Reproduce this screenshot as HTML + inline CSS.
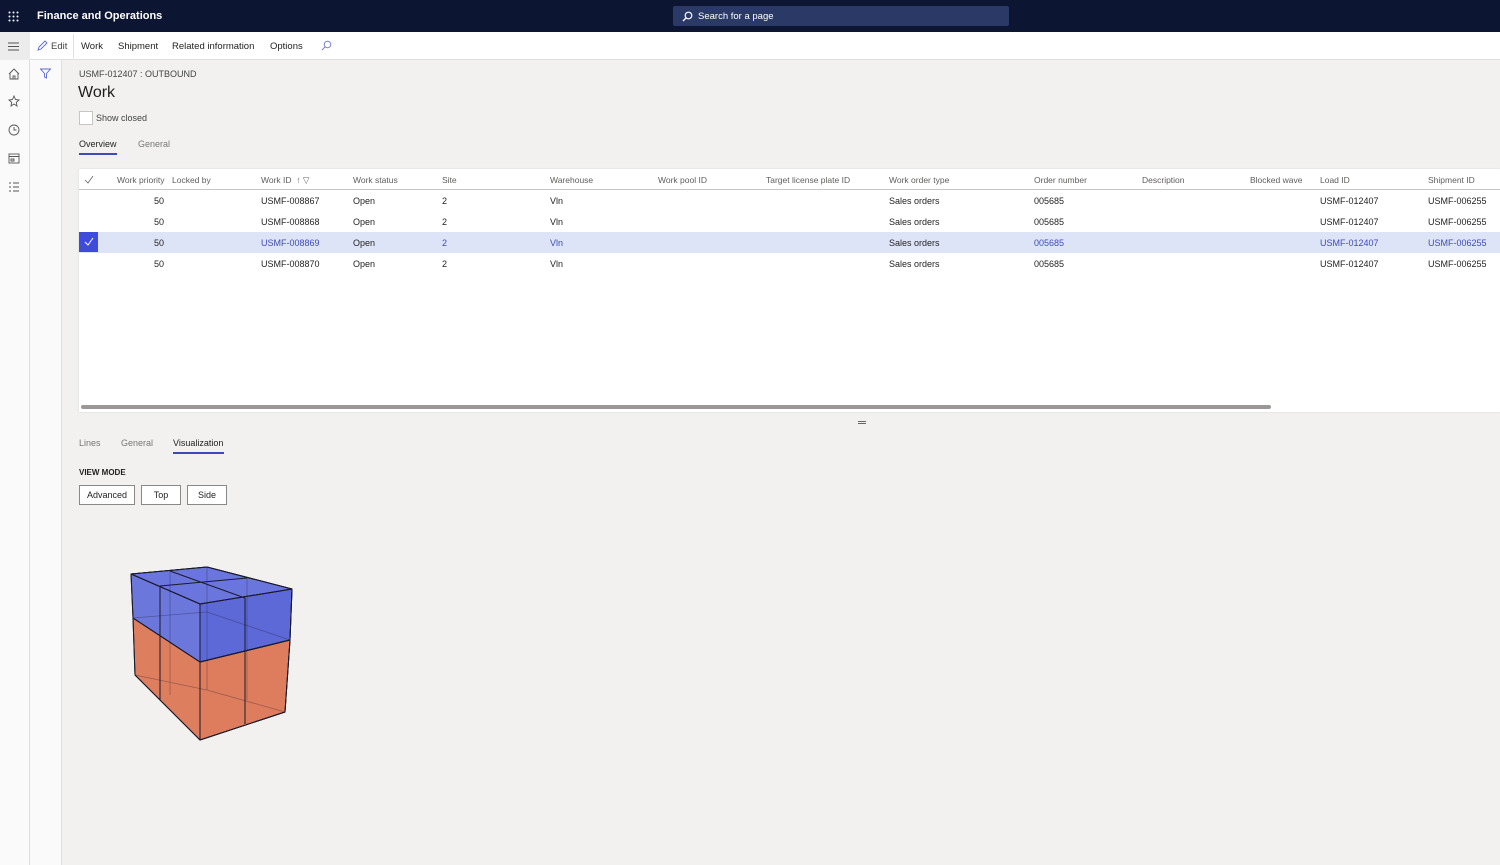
<!DOCTYPE html>
<html><head><meta charset="utf-8"><style>
*{margin:0;padding:0;box-sizing:border-box}
body{width:1500px;height:865px;overflow:hidden;background:#f2f1ef;font-family:"Liberation Sans",sans-serif;color:#201f1e;position:relative;font-size:9px}
.a{position:absolute;white-space:nowrap}
.top{left:0;top:0;width:1500px;height:32px;background:#0c1633}
.bar{left:0;top:32px;width:1500px;height:28px;background:#fff;border-bottom:1px solid #e1dfdd}
.nav{left:0;top:60px;width:30px;height:805px;background:#fafafa;border-right:1px solid #e1dfdd}
.fp{left:30px;top:60px;width:32px;height:805px;background:#fafafa;border-right:1px solid #e1dfdd}
.grid{left:79px;top:169px;width:1421px;height:243px;background:#fff;box-shadow:0 0 2px rgba(0,0,0,.12)}
.hd{color:#605e5c;font-size:8.5px;top:175px}
.c{font-size:9px}
.sel{background:#dde4f8}
.lk{color:#3e4bb5}
.btn{top:485px;height:20px;border:1px solid #8a8886;background:#fff;font-size:9px;text-align:center;line-height:18px}
</style></head><body>
<div class="a top"></div>
<svg class="a" style="left:8px;top:11px" width="11" height="11"><g fill="#fff"><circle cx="1.5" cy="1.5" r="1"/><circle cx="5.5" cy="1.5" r="1"/><circle cx="9.5" cy="1.5" r="1"/><circle cx="1.5" cy="5.5" r="1"/><circle cx="5.5" cy="5.5" r="1"/><circle cx="9.5" cy="5.5" r="1"/><circle cx="1.5" cy="9.5" r="1"/><circle cx="5.5" cy="9.5" r="1"/><circle cx="9.5" cy="9.5" r="1"/></g></svg>
<div class="a" style="left:37px;top:10px;color:#fff;font-size:11px;font-weight:bold">Finance and Operations</div>
<div class="a" style="left:673px;top:6px;width:336px;height:20px;background:#2b3966;border-radius:2px"></div>
<svg class="a" style="left:682px;top:11px" width="11" height="11"><circle cx="6.5" cy="4.5" r="3.3" stroke="#fff" stroke-width="1.2" fill="none"/><path d="M4 7 L1 10" stroke="#fff" stroke-width="1.3"/></svg>
<div class="a" style="left:698px;top:11px;color:#fff;font-size:9.5px">Search for a page</div>
<div class="a bar"></div>
<div class="a" style="left:0;top:32px;width:30px;height:28px;background:#ececec"></div>
<svg class="a" style="left:8px;top:42px" width="12" height="9"><path d="M0 1H11M0 4.5H11M0 8H11" stroke="#555" stroke-width="1"/></svg>
<svg class="a" style="left:37px;top:40px" width="11" height="11"><path d="M1 10 L2 7 L8 1 L10 3 L4 9 Z" stroke="#5c67c9" fill="none" stroke-width="0.9"/></svg>
<div class="a" style="left:51px;top:41px;font-size:9.5px;color:#444">Edit</div>
<div class="a" style="left:73px;top:34px;width:1px;height:24px;background:#e1dfdd"></div>
<div class="a" style="left:81px;top:41px;font-size:9.5px">Work</div>
<div class="a" style="left:118px;top:41px;font-size:9.5px">Shipment</div>
<div class="a" style="left:172px;top:41px;font-size:9.5px">Related information</div>
<div class="a" style="left:270px;top:41px;font-size:9.5px">Options</div>
<svg class="a" style="left:321px;top:40px" width="11" height="11"><circle cx="6.5" cy="4.5" r="3.3" stroke="#7a80d0" stroke-width="1" fill="none"/><path d="M4 7 L1 10" stroke="#7a80d0" stroke-width="1.1"/></svg>
<div class="a nav"></div><div class="a fp"></div>
<svg class="a" style="left:7px;top:67px" width="14" height="130" fill="none" stroke="#555" stroke-width="0.9">
<path d="M2 7 L7 2 L12 7 M3 6V12H11V6 M6 12V9H8V12"/>
<path d="M7 29 L8.5 32.5 L12 33 L9.3 35.3 L10 39 L7 37 L4 39 L4.7 35.3 L2 33 L5.5 32.5Z"/>
<circle cx="7" cy="63" r="5"/><path d="M7 60V63H9.5"/>
<rect x="2" y="87" width="10" height="9"/><path d="M2 89.5H12M4 92H7V94H4Z"/>
<path d="M2 116H4M2 120H4M2 124H4M6 116H12M6 120H12M6 124H12"/></svg>
<svg class="a" style="left:40px;top:68px" width="11" height="11"><path d="M0.5 1H10.5L6.5 5.5V10L4.5 9V5.5Z" stroke="#5c67c9" fill="none" stroke-width="0.9"/></svg>
<div class="a" style="left:79px;top:69px;font-size:9px;color:#444">USMF-012407 : OUTBOUND</div>
<div class="a" style="left:78px;top:84px;font-size:16px">Work</div>
<div class="a" style="left:79px;top:111px;width:14px;height:14px;background:#fff;border:1px solid #c8c6c4"></div>
<div class="a" style="left:96px;top:113px;font-size:9px;color:#444">Show closed</div>
<div class="a" style="left:79px;top:139px;font-size:9px">Overview</div>
<div class="a" style="left:79px;top:153px;width:38px;height:2px;background:#3e4bb5"></div>
<div class="a" style="left:138px;top:139px;font-size:9px;color:#777">General</div>
<div class="a grid"></div>
<div class="a" style="left:79px;top:189px;width:1421px;height:1px;background:#c8c6c4"></div>
<div class="a sel" style="left:79px;top:232px;width:1421px;height:21px"></div>
<div class="a" style="left:79px;top:232px;width:19px;height:20px;background:#3e4bdb"></div>
<svg class="a" style="left:84px;top:237px" width="10" height="9"><path d="M1 5L4 8L9 1" stroke="#fff" fill="none" stroke-width="1"/></svg>
<svg class="a" style="left:84px;top:175px" width="10" height="9"><path d="M1 5L4 8L9 1" stroke="#666" fill="none" stroke-width="0.8"/></svg>
<div class="a hd" style="left:117px">Work priority</div>
<div class="a hd" style="left:172px">Locked by</div>
<div class="a hd" style="left:261px">Work ID &nbsp;↑ ▽</div>
<div class="a hd" style="left:353px">Work status</div>
<div class="a hd" style="left:442px">Site</div>
<div class="a hd" style="left:550px">Warehouse</div>
<div class="a hd" style="left:658px">Work pool ID</div>
<div class="a hd" style="left:766px">Target license plate ID</div>
<div class="a hd" style="left:889px">Work order type</div>
<div class="a hd" style="left:1034px">Order number</div>
<div class="a hd" style="left:1142px">Description</div>
<div class="a hd" style="left:1250px">Blocked wave</div>
<div class="a hd" style="left:1320px">Load ID</div>
<div class="a hd" style="left:1428px">Shipment ID</div>
<div class="a c" style="left:154px;top:196px">50</div><div class="a c" style="left:261px;top:196px">USMF-008867</div><div class="a c" style="left:353px;top:196px">Open</div><div class="a c" style="left:442px;top:196px">2</div><div class="a c" style="left:550px;top:196px">Vln</div><div class="a c" style="left:889px;top:196px">Sales orders</div><div class="a c" style="left:1034px;top:196px">005685</div><div class="a c" style="left:1320px;top:196px">USMF-012407</div><div class="a c" style="left:1428px;top:196px">USMF-006255</div>
<div class="a c" style="left:154px;top:217px">50</div><div class="a c" style="left:261px;top:217px">USMF-008868</div><div class="a c" style="left:353px;top:217px">Open</div><div class="a c" style="left:442px;top:217px">2</div><div class="a c" style="left:550px;top:217px">Vln</div><div class="a c" style="left:889px;top:217px">Sales orders</div><div class="a c" style="left:1034px;top:217px">005685</div><div class="a c" style="left:1320px;top:217px">USMF-012407</div><div class="a c" style="left:1428px;top:217px">USMF-006255</div>
<div class="a c" style="left:154px;top:238px">50</div><div class="a c lk" style="left:261px;top:238px">USMF-008869</div><div class="a c" style="left:353px;top:238px">Open</div><div class="a c lk" style="left:442px;top:238px">2</div><div class="a c lk" style="left:550px;top:238px">Vln</div><div class="a c" style="left:889px;top:238px">Sales orders</div><div class="a c lk" style="left:1034px;top:238px">005685</div><div class="a c lk" style="left:1320px;top:238px">USMF-012407</div><div class="a c lk" style="left:1428px;top:238px">USMF-006255</div>
<div class="a c" style="left:154px;top:259px">50</div><div class="a c" style="left:261px;top:259px">USMF-008870</div><div class="a c" style="left:353px;top:259px">Open</div><div class="a c" style="left:442px;top:259px">2</div><div class="a c" style="left:550px;top:259px">Vln</div><div class="a c" style="left:889px;top:259px">Sales orders</div><div class="a c" style="left:1034px;top:259px">005685</div><div class="a c" style="left:1320px;top:259px">USMF-012407</div><div class="a c" style="left:1428px;top:259px">USMF-006255</div>
<div class="a" style="left:81px;top:405px;width:1190px;height:4px;background:#9a9896;border-radius:2px"></div>
<div class="a" style="left:858px;top:421px;width:8px;height:1px;background:#666"></div>
<div class="a" style="left:858px;top:423px;width:8px;height:1px;background:#666"></div>
<div class="a" style="left:79px;top:438px;font-size:9px;color:#777">Lines</div>
<div class="a" style="left:121px;top:438px;font-size:9px;color:#777">General</div>
<div class="a" style="left:173px;top:438px;font-size:9px">Visualization</div>
<div class="a" style="left:173px;top:452px;width:51px;height:2px;background:#3e4bb5"></div>
<div class="a" style="left:79px;top:468px;font-size:8px;font-weight:bold">VIEW MODE</div>
<div class="a btn" style="left:79px;width:56px">Advanced</div>
<div class="a btn" style="left:141px;width:40px">Top</div>
<div class="a btn" style="left:187px;width:40px">Side</div>
<svg class="a" style="left:0;top:0" width="400" height="800" stroke="#1a1a2a" stroke-width="1" stroke-linejoin="round">
<polygon points="133,618 200,662 290,640 285,712 200,740 135,675" fill="#d96a45" fill-opacity="0.85"/>
<polygon points="131,574 207,567 292,589 290,640 200,662 133,618" fill="#5561d8" fill-opacity="0.85"/>
<polygon points="131,574 207,567 292,589 200,604" fill="#6a74e0" fill-opacity="0.5"/>
<polygon points="200,604 292,589 290,640 200,662" fill="#3f4ad0" fill-opacity="0.3"/>
<polygon points="200,662 290,640 285,712 200,740" fill="#e07a58" fill-opacity="0.3"/>
<g fill="none">
<path d="M131,574 L133,618 L135,675 L200,740 L285,712 L290,640 L292,589 L207,567 Z"/>
<path d="M131,574 L200,604 L292,589 M200,604 L200,740"/>
<path d="M133,618 L200,662 L290,640"/>
<path d="M160,586 L160,700 M160,586 L247,578 M170,571 L245,598 M245,598 L245,724"/>
</g>
<g fill="none" stroke="#1a1a2a" stroke-opacity="0.35" stroke-width="0.8">
<path d="M207,567 L207,690 M207,690 L135,675 M207,690 L285,712 M170,571 L170,695 M247,578 L247,700"/>
<path d="M133,618 L207,612 L290,640"/>
</g></svg>
</body></html>
